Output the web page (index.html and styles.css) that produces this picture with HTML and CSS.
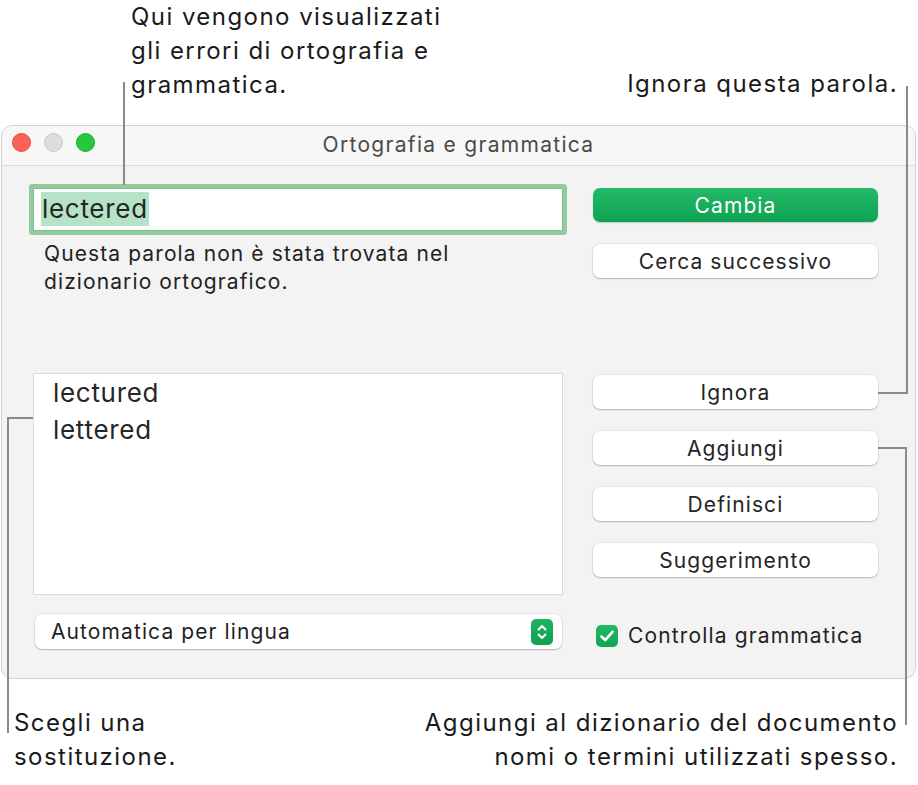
FILE: index.html
```html
<!DOCTYPE html>
<html lang="it">
<head>
<meta charset="utf-8">
<title>Ortografia e grammatica</title>
<link rel="stylesheet" href="styles.css">
</head>
<body>
<div class="page">
  <div class="top-callouts">
    <p class="callout callout-left">Qui vengono visualizzati<br>gli errori di ortografia e<br>grammatica.</p>
    <p class="callout callout-right">Ignora questa parola.</p>
  </div>

  <div class="window">
    <div class="titlebar">
      <div class="lights">
        <span class="light red"></span>
        <span class="light grey"></span>
        <span class="light green"></span>
      </div>
      <div class="title">Ortografia e grammatica</div>
      <div></div>
    </div>
    <div class="content">
      <div class="col-left">
        <div class="field"><span class="sel">lectered</span></div>
        <p class="desc">Questa parola non è stata trovata nel<br>dizionario ortografico.</p>
        <div class="list">
          <div class="item">lectured</div>
          <div class="item">lettered</div>
        </div>
        <div class="popup">
          <span>Automatica per lingua</span>
          <span class="stepper">
            <svg width="22" height="26" viewBox="0 0 22 26"><path d="M7.5 10.5 L11 7 L14.5 10.5 M7.5 15.5 L11 19 L14.5 15.5" fill="none" stroke="#fff" stroke-width="2" stroke-linecap="round" stroke-linejoin="round"/></svg>
          </span>
        </div>
      </div>
      <div class="col-right">
        <div class="btn primary">Cambia</div>
        <div class="btn gap-sm">Cerca successivo</div>
        <div class="btn gap-lg">Ignora</div>
        <div class="btn gap-sm">Aggiungi</div>
        <div class="btn gap-sm">Definisci</div>
        <div class="btn gap-sm">Suggerimento</div>
        <div class="check-row">
          <span class="checkbox">
            <svg width="22" height="22" viewBox="0 0 22 22"><path d="M5.5 11.5 L9.2 15.2 L16.5 6.8" fill="none" stroke="#fff" stroke-width="2.6" stroke-linecap="round" stroke-linejoin="round"/></svg>
          </span>
          <span class="check-label">Controlla grammatica</span>
        </div>
      </div>
    </div>
  </div>

  <div class="bottom-callouts">
    <p class="callout callout-bl">Scegli una<br>sostituzione.</p>
    <p class="callout callout-br">Aggiungi al dizionario del documento<br>nomi o termini utilizzati spesso.</p>
  </div>

  <div class="leader l1"></div>
  <div class="leader l2v"></div>
  <div class="leader l2h"></div>
  <div class="leader l3v"></div>
  <div class="leader l3h"></div>
  <div class="leader l4h"></div>
  <div class="leader l4v"></div>
</div>
</body>
</html>
```

FILE: styles.css
```css
* { box-sizing: border-box; }

html, body {
  margin: 0;
  padding: 0;
  background: #ffffff;
}

body {
  font-family: Inter, "Noto Sans", "Liberation Sans", sans-serif;
  color: #1c1c1c;
}

.page {
  position: relative;
  width: 918px;
  height: 785px;
  overflow: hidden;
}

p { margin: 0; }

.callout {
  font-size: 24px;
  line-height: 34px;
  letter-spacing: 1.45px;
  color: #1a1a1a;
}

.top-callouts {
  height: 125px;
  display: flex;
  justify-content: space-between;
  align-items: flex-start;
}

.callout-left {
  padding-left: 131px;
}

.callout-right {
  align-self: flex-end;
  margin-bottom: 24px;
  padding-right: 20px;
  text-align: right;
}

/* window */
.window {
  margin-left: 1px;
  width: 915px;
  height: 554px;
  border: 1px solid #d2d2d2;
  border-radius: 11px;
  background: #f3f3f3;
  overflow: hidden;
}

.titlebar {
  height: 40px;
  background: #f7f7f7;
  border-bottom: 1px solid #dcdcdc;
  display: grid;
  grid-template-columns: 1fr auto 1fr;
  align-items: center;
}

.lights {
  display: flex;
  gap: 13px;
  padding-left: 10px;
  align-self: start;
  padding-top: 7px;
}

.light {
  width: 19px;
  height: 19px;
  border-radius: 50%;
}
.light.red { background: #fe5f57; border: 1px solid #e5483f; }
.light.grey { background: #dddddd; border: 1px solid #c9c9c9; }
.light.green { background: #27c83f; border: 1px solid #1aad2c; }

.title {
  font-size: 21px;
  letter-spacing: 1.3px;
  color: #4a4a4a;
  margin-top: -3px;
}

.content {
  display: flex;
  padding-left: 31px;
  gap: 30px;
}

.col-left {
  width: 530px;
  display: flex;
  flex-direction: column;
}

.field {
  margin-top: 22px;
  height: 43px;
  background: #ffffff;
  border: 1px solid #7fbf8e;
  box-shadow: 0 0 0 4px #93cba1;
  border-radius: 1px;
  padding: 3px 0 0 7px;
}

.sel {
  display: inline-block;
  background: #b5e3c6;
  font-size: 26px;
  letter-spacing: 0.7px;
  line-height: 34px;
  padding: 0 1px;
  color: #262626;
}

.desc {
  margin-top: 9px;
  padding-left: 11px;
  font-size: 21px;
  letter-spacing: 1.1px;
  line-height: 28px;
  color: #222;
}

.list {
  margin-top: 77px;
  height: 222px;
  background: #ffffff;
  border: 1px solid #dadada;
  padding-left: 19px;
}

.item {
  font-size: 26px;
  letter-spacing: 0.7px;
  line-height: 37px;
  color: #262626;
}

.popup {
  margin: 19px 1px 0 2px;
  height: 35px;
  background: #ffffff;
  border-radius: 7px;
  box-shadow: 0 1px 1.5px rgba(0,0,0,0.22), 0 0 0 0.5px rgba(0,0,0,0.10);
  display: flex;
  align-items: center;
  justify-content: space-between;
  padding: 0 9px 0 16px;
  font-size: 21px;
  letter-spacing: 1.1px;
  color: #1f1f1f;
}

.stepper {
  width: 22px;
  height: 26px;
  border-radius: 5px;
  background: linear-gradient(#1eb263, #10a152);
  display: flex;
}

.col-right {
  width: 285px;
  display: flex;
  flex-direction: column;
}

.btn {
  height: 34px;
  border-radius: 7px;
  background: #ffffff;
  box-shadow: 0 1px 1.5px rgba(0,0,0,0.22), 0 0 0 0.5px rgba(0,0,0,0.10);
  display: flex;
  align-items: center;
  justify-content: center;
  font-size: 21px;
  letter-spacing: 1.1px;
  color: #242424;
}

.btn.primary {
  margin-top: 22px;
  background: linear-gradient(#22b968, #0ea352);
  color: #ffffff;
  box-shadow: 0 1px 1.5px rgba(0,0,0,0.18);
}

.gap-sm { margin-top: 22px; }
.gap-lg { margin-top: 97px; }

.check-row {
  margin-top: 46px;
  display: flex;
  align-items: center;
  gap: 10px;
  padding-left: 3px;
}

.checkbox {
  width: 22px;
  height: 22px;
  border-radius: 5px;
  background: linear-gradient(#22b968, #10a354);
  display: flex;
}

.check-label {
  font-size: 21px;
  letter-spacing: 1.15px;
  color: #232323;
}

.bottom-callouts {
  display: flex;
  justify-content: space-between;
  margin-top: 27px;
}

.callout-bl { padding-left: 14px; }
.callout-br { padding-right: 20px; text-align: right; }

/* leader lines drawn over the window */
.leader {
  position: absolute;
  background: #8a8a8a;
}
.l1 { left: 123px; top: 82px; width: 2px; height: 103px; }
.l2v { left: 906px; top: 86px; width: 2px; height: 308px; }
.l2h { left: 878px; top: 392px; width: 30px; height: 2px; }
.l3v { left: 7px; top: 417px; width: 2px; height: 316px; }
.l3h { left: 7px; top: 417px; width: 26px; height: 2px; }
.l4h { left: 878px; top: 447px; width: 29px; height: 2px; }
.l4v { left: 905px; top: 447px; width: 2px; height: 278px; }
```
